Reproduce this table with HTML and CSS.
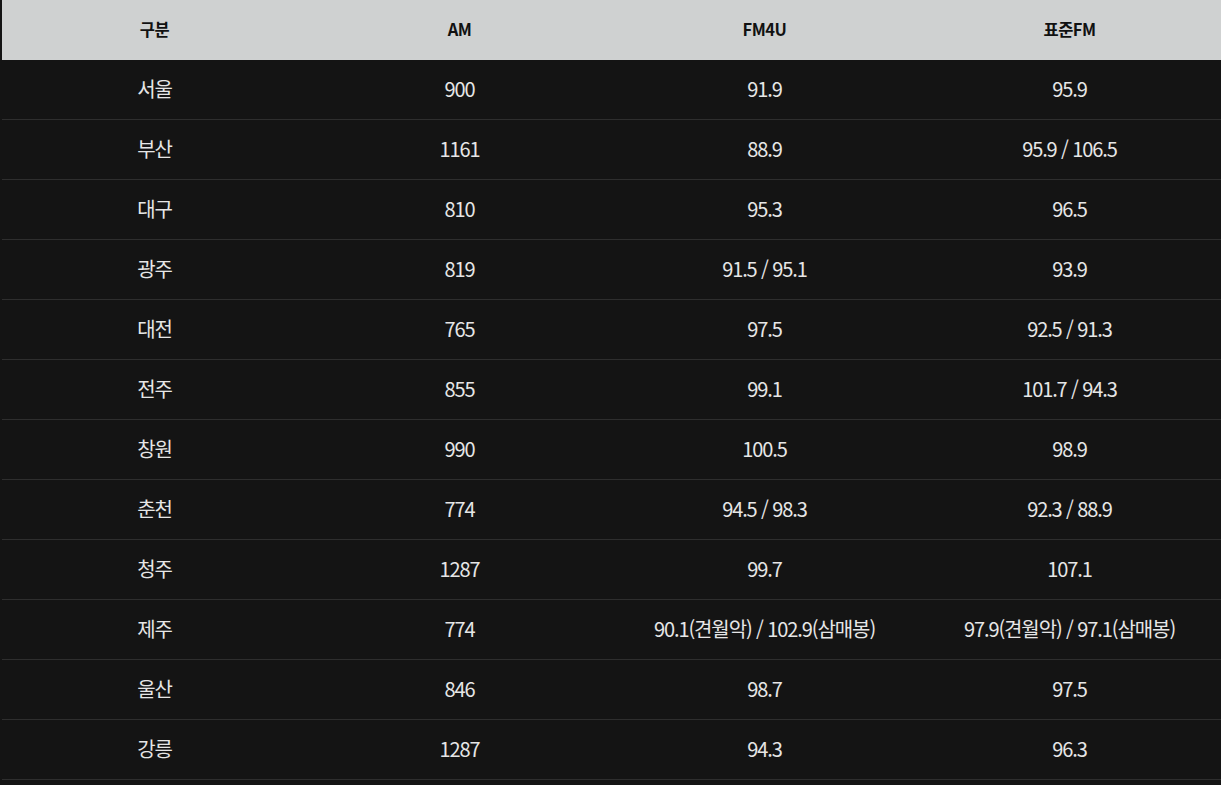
FILE: index.html
```html
<!DOCTYPE html>
<html lang="ko">
<head>
<meta charset="utf-8">
<link rel="stylesheet" href="styles.css">
</head>
<body>
<table class="freq">
  <thead>
    <tr><th>구분</th><th>AM</th><th>FM4U</th><th>표준FM</th></tr>
  </thead>
  <tbody>
    <tr><td>서울</td><td>900</td><td>91.9</td><td>95.9</td></tr>
    <tr><td>부산</td><td>1161</td><td>88.9</td><td>95.9 / 106.5</td></tr>
    <tr><td>대구</td><td>810</td><td>95.3</td><td>96.5</td></tr>
    <tr><td>광주</td><td>819</td><td>91.5 / 95.1</td><td>93.9</td></tr>
    <tr><td>대전</td><td>765</td><td>97.5</td><td>92.5 / 91.3</td></tr>
    <tr><td>전주</td><td>855</td><td>99.1</td><td>101.7 / 94.3</td></tr>
    <tr><td>창원</td><td>990</td><td>100.5</td><td>98.9</td></tr>
    <tr><td>춘천</td><td>774</td><td>94.5 / 98.3</td><td>92.3 / 88.9</td></tr>
    <tr><td>청주</td><td>1287</td><td>99.7</td><td>107.1</td></tr>
    <tr><td>제주</td><td>774</td><td>90.1(견월악) / 102.9(삼매봉)</td><td>97.9(견월악) / 97.1(삼매봉)</td></tr>
    <tr><td>울산</td><td>846</td><td>98.7</td><td>97.5</td></tr>
    <tr><td>강릉</td><td>1287</td><td>94.3</td><td>96.3</td></tr>
  </tbody>
</table>
</body>
</html>
```
FILE: styles.css
```css
html, body {
  margin: 0;
  padding: 0;
  background: #141414;
  overflow: hidden;
}
body {
  padding-left: 2px;
  font-family: "Noto Sans CJK KR", "Noto Sans", sans-serif;
}
.freq {
  width: 1220px;
  border-collapse: collapse;
  table-layout: fixed;
}
.freq th {
  height: 58px;
  padding: 0 0 2px;
  background: #cfd1d1;
  color: #111;
  font-size: 16.5px;
  font-weight: 700;
  letter-spacing: -0.5px;
  text-align: center;
  vertical-align: middle;
}
.freq td {
  height: 57px;
  padding: 0 0 2px;
  border-bottom: 1px solid #2e2e2e;
  color: #e6e6e6;
  font-size: 20px;
  letter-spacing: -1.1px;
  text-align: center;
  vertical-align: middle;
}
```
